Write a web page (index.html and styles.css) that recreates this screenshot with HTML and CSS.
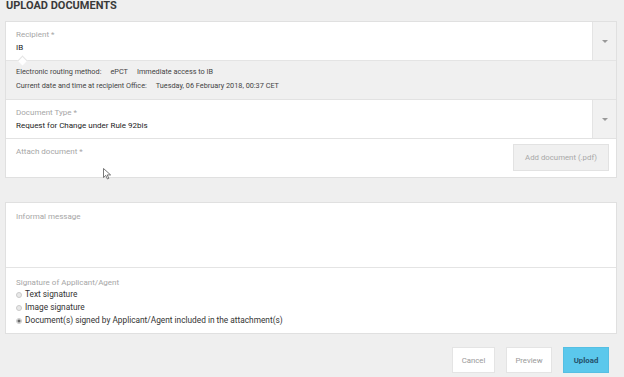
FILE: index.html
```html
<!DOCTYPE html>
<html lang="en">
<head>
    <meta charset="UTF-8">
    <meta name="viewport" content="width=device-width, initial-scale=1.0">
    <title>Upload documents</title>
    <link rel="stylesheet" href="styles.css">
</head>
<body>

    <div class="page">
        <h1>Upload documents</h1>

        <div class="card">
            <div class="select-row">
                <div class="field">
                    <label>Recipient *</label>
                    <div class="value">IB</div>
                </div>
                <div class="caret"><span></span></div>
            </div>

            <div class="info">
                <div class="info-line">
                    <span>Electronic routing method:</span>
                    <span>ePCT</span>
                    <span>Immediate access to IB</span>
                </div>
                <div class="info-line">
                    <span>Current date and time at recipient Office:</span>
                    <span>Tuesday, 06 February 2018, 00:37 CET</span>
                </div>
            </div>

            <div class="select-row bordered">
                <div class="field">
                    <label>Document Type *</label>
                    <div class="value">Request for Change under Rule 92bis</div>
                </div>
                <div class="caret"><span></span></div>
            </div>

            <div class="attach-row">
                <label>Attach document *</label>
                <button class="btn-add" type="button">Add document (.pdf)</button>
            </div>
        </div>

        <div class="card message-card">
            <div class="message">
                <label>Informal message</label>
            </div>
            <div class="signature">
                <label>Signature of Applicant/Agent</label>
                <div class="radio"><span class="dot"></span>Text signature</div>
                <div class="radio"><span class="dot"></span>Image signature</div>
                <div class="radio"><span class="dot checked"></span>Document(s) signed by Applicant/Agent included in the attachment(s)</div>
            </div>
        </div>

        <div class="actions">
            <button class="btn btn-cancel" type="button">Cancel</button>
            <button class="btn" type="button">Preview</button>
            <button class="btn btn-primary" type="button">Upload</button>
        </div>

        <!-- mouse pointer left on the screen -->
        <svg class="pointer" width="9" height="12" viewBox="0 0 9 12">
            <path d="M0.5 0.5 L0.5 9.5 L2.8 7.4 L4.4 11 L5.8 10.4 L4.3 6.9 L7.6 6.9 Z" fill="#fff" stroke="#555" stroke-width="0.8"/>
        </svg>
    </div>

</body>
</html>
```

FILE: styles.css
```css
* {
    box-sizing: border-box;
}

body {
    margin: 0;
    padding: 0;
    background-color: #efefef;
    font-family: Roboto, 'Liberation Sans', sans-serif;
    color: #333;
}

.page {
    position: relative;
    padding: 0 7px 0 5px;
}

h1 {
    margin: 0;
    padding: 0 1px;
    height: 21px;
    font-size: 11px;
    line-height: 12px;
    font-weight: bold;
    text-transform: uppercase;
    color: #3a3a3a;
}

label {
    display: block;
    font-size: 8px;
    color: #a6a6a6;
}

/* cartes blanches */
.card {
    background-color: #fff;
    border: 1px solid #e0e0e0;
}

.select-row {
    display: flex;
    height: 38px;
}

.select-row.bordered {
    height: 39px;
    border-top: 1px solid #e2e2e2;
}

.field {
    flex: 1;
    padding: 7px 10px 0;
}

.field label {
    line-height: 12px;
}

.value {
    font-size: 8px;
    line-height: 14px;
    color: #222;
}

.caret {
    width: 24px;
    background-color: #f1f1f1;
    border-left: 1px solid #e4e4e4;
    display: flex;
    align-items: center;
    justify-content: center;
}

.caret span {
    width: 0;
    height: 0;
    border-left: 3px solid transparent;
    border-right: 3px solid transparent;
    border-top: 3px solid #999;
}

.info {
    position: relative;
    height: 39px;
    padding: 4px 10px 0;
    background-color: #f0f0f0;
    border-top: 1px solid #e4e4e4;
}

/* petite pointe sous la valeur */
.info::before {
    content: '';
    position: absolute;
    top: -4px;
    left: 13px;
    width: 6px;
    height: 6px;
    background-color: #fff;
    border-right: 1px solid #e4e4e4;
    border-bottom: 1px solid #e4e4e4;
    transform: rotate(-135deg);
}

.info-line {
    display: flex;
    gap: 9px;
    font-size: 7.3px;
    line-height: 14px;
    color: #444;
}

.attach-row {
    display: flex;
    justify-content: space-between;
    align-items: flex-start;
    height: 39px;
    padding: 0 7px 0 10px;
    border-top: 1px solid #e2e2e2;
}

.attach-row label {
    padding-top: 7px;
    line-height: 12px;
}

.btn-add {
    margin-top: 5px;
    width: 96px;
    height: 27px;
    background-color: #f0f0f0;
    border: 1px solid #e2e2e2;
    font-family: inherit;
    font-size: 7.8px;
    color: #a8a8a8;
}

.message-card {
    margin-top: 24px;
}

.message {
    height: 65px;
    padding: 8px 10px 0;
    border-bottom: 1px solid #e4e4e4;
}

.message label {
    line-height: 12px;
}

.signature {
    height: 65px;
    padding: 9px 10px 0;
}

.signature label {
    line-height: 11px;
}

.radio {
    display: flex;
    align-items: center;
    gap: 3px;
    font-size: 8.3px;
    line-height: 13px;
    color: #333;
}

.dot {
    width: 6px;
    height: 6px;
    border-radius: 50%;
    border: 1px solid #cacaca;
    background-color: #e8e8e8;
}

.dot.checked {
    background: radial-gradient(circle, #666 0 1.3px, #e8e8e8 1.8px);
}

.actions {
    display: flex;
    justify-content: flex-end;
    gap: 11px;
    padding: 13px 8px 0 0;
}

.btn {
    width: 46px;
    height: 26px;
    padding: 0;
    background-color: #fff;
    border: 1px solid #e4e4e4;
    font-family: inherit;
    font-size: 7.8px;
    color: #999;
}

.btn-cancel {
    width: 43px;
}

.btn-primary {
    background-color: #5bc8ec;
    border-color: #55bfe3;
    color: #24506a;
    font-weight: bold;
}

.pointer {
    position: absolute;
    left: 103px;
    top: 168px;
}
```
